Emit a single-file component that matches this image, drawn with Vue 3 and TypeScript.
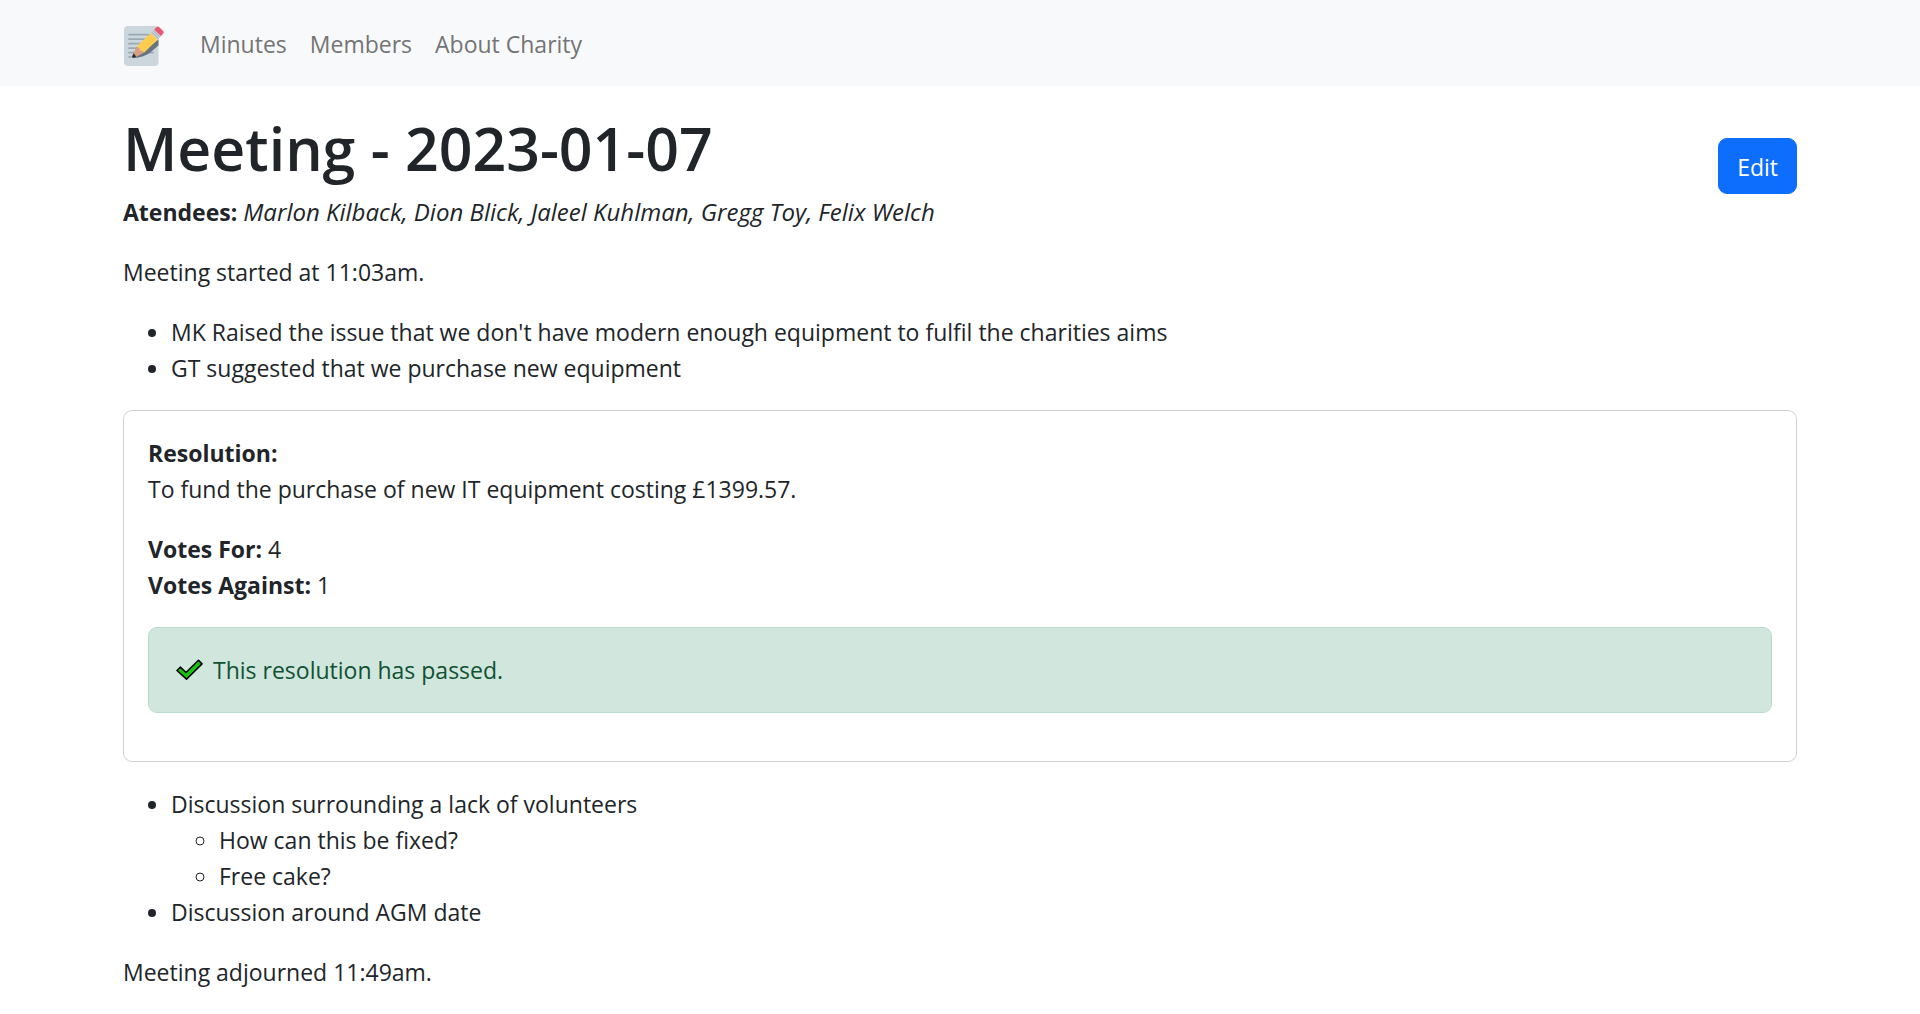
<script setup lang="ts">
interface NavItem {
  label: string
  href: string
}

interface Topic {
  text: string
  notes?: string[]
}

const navItems: NavItem[] = [
  { label: 'Minutes', href: '#minutes' },
  { label: 'Members', href: '#members' },
  { label: 'About Charity', href: '#about' },
]

const attendees: string[] = ['Marlon Kilback', 'Dion Blick', 'Jaleel Kuhlman', 'Gregg Toy', 'Felix Welch']

const openingTopics: Topic[] = [
  { text: "MK Raised the issue that we don't have modern enough equipment to fulfil the charities aims" },
  { text: 'GT suggested that we purchase new equipment' },
]

const resolution = {
  text: 'To fund the purchase of new IT equipment costing £1399.57.',
  votesFor: 4,
  votesAgainst: 1,
}

const closingTopics: Topic[] = [
  { text: 'Discussion surrounding a lack of volunteers', notes: ['How can this be fixed?', 'Free cake?'] },
  { text: 'Discussion around AGM date' },
]
</script>

<template>
  <header class="navbar">
    <nav class="container navbar-inner">
      <a class="brand" href="#home" aria-label="Home">
        <svg width="41" height="40" viewBox="0 0 41 40" aria-hidden="true">
          <rect x="1" width="34.5" height="40" rx="4" fill="#ccd6dd" />
          <path
            d="M6 8.7h20M6 13.2h18M6 17.7h14M6 22.2h10M6 26.6h24M6 31h8"
            stroke="#99aab5"
            stroke-width="1.7"
            stroke-linecap="round"
          />
          <path d="M35.5 13.5v5.8C29.500 24 25 31.600 10 32l10-7z" fill="#66757f" />
          <path d="M9.700 31.800c-.8-.2-.9-.9-.6-1.700l4.700-9.600 6.800 6.500-9 4.600z" fill="#d99e82" />
          <path d="M10.700 27.200l2.500 3.500-1.900 1c-1.200.4-2.400-.1-2.100-1.500z" fill="#292f33" />
          <path d="M27.700 7.100l6.800 6.700L20.700 27c-.7-1.700-1.600-2.200-3.300-3-.7-1.600-1.700-2.500-3.600-3.500z" fill="#ffcc4d" />
          <path d="M31.200 3.500l6.700 6.700-3.400 3.600-6.800-6.700z" fill="#ccd6dd" />
          <path d="M28.700 6.200l6.700 6.700M30.200 4.600l6.700 6.700" stroke="#99aab5" stroke-width="1" />
          <path d="M31.200 3.500l2.400-2.600c.8-.7 1.700-.7 2.500 0l4 4.100c.8.800.8 1.700.1 2.500l-2.300 2.700z" fill="#ea596e" />
        </svg>
      </a>
      <a v-for="item in navItems" :key="item.label" class="nav-link" :href="item.href">{{ item.label }}</a>
    </nav>
  </header>

  <main class="container content">
    <div class="title-row">
      <h1>Meeting - 2023-01-07</h1>
      <button class="edit" type="button">Edit</button>
    </div>
    <p><strong>Atendees:</strong> <em>{{ attendees.join(', ') }}</em></p>
    <p>Meeting started at 11:03am.</p>

    <ul>
      <li v-for="topic in openingTopics" :key="topic.text">{{ topic.text }}</li>
    </ul>

    <section class="card">
      <p>
        <strong>Resolution:</strong><br />
        {{ resolution.text }}
      </p>
      <p>
        <strong>Votes For:</strong> {{ resolution.votesFor }}<br />
        <strong>Votes Against:</strong> {{ resolution.votesAgainst }}
      </p>
      <div class="alert" role="status">
        <svg width="32" height="24" viewBox="0 0 32 24" aria-hidden="true">
          <path
            d="M4 12.500l3.300-3.300 5.700 5.300L25.500 2.300l3.500 3.600L13.500 21.200z"
            fill="#16c60c"
            stroke="#000"
            stroke-width="1.600"
            stroke-linejoin="round"
          />
        </svg>
        <span>This resolution has passed.</span>
      </div>
    </section>

    <ul>
      <li v-for="topic in closingTopics" :key="topic.text">
        {{ topic.text }}
        <ul v-if="topic.notes">
          <li v-for="note in topic.notes" :key="note">{{ note }}</li>
        </ul>
      </li>
    </ul>

    <p>Meeting adjourned 11:49am.</p>
  </main>
</template>

<style>
body {
  margin: 0;
  background: #fff;
  color: #212529;
  font-family: 'Segoe UI', 'Open Sans', 'Noto Sans', sans-serif;
  font-size: 23px;
  line-height: 36px;
}
</style>

<style scoped>
.container {
  box-sizing: border-box;
  width: 100%;
  max-width: 1710px;
  margin: 0 auto;
  padding: 0 18px;
}

.navbar {
  background: #f8f9fa;
}

.navbar-inner {
  display: flex;
  align-items: center;
  min-height: 86px;
}

.brand {
  display: flex;
  margin: 6px 24px 0 0;
}

.nav-link {
  padding: 2px 11px 0 12px;
  color: #737475;
  text-decoration: none;
}

.content {
  padding-top: 24px;
}

.title-row {
  display: flex;
  align-items: flex-end;
  justify-content: space-between;
}

h1 {
  margin: 0 0 8px;
  font-size: 59px;
  font-weight: 600;
  line-height: 76px;
}

.edit {
  padding: 10px 18px 8px;
  border: 1px solid #0d6efd;
  border-radius: 9px;
  background: #0d6efd;
  color: #fff;
  font: inherit;
}

p {
  margin: 0 0 24px;
}

strong {
  font-weight: 700;
}

em {
  font-size: 24px;
}

ul {
  margin: 0 0 24px;
  padding-left: 48px;
}

ul ul {
  margin-bottom: 0;
}

.card {
  margin-bottom: 24px;
  padding: 24px;
  border: 1px solid #d2d2d2;
  border-radius: 9px;
}

.alert {
  display: flex;
  align-items: center;
  gap: 8px;
  margin-bottom: 24px;
  padding: 24px;
  border: 1px solid #badbcc;
  border-radius: 9px;
  background: #d1e7dd;
  color: #0f5132;
}
</style>
